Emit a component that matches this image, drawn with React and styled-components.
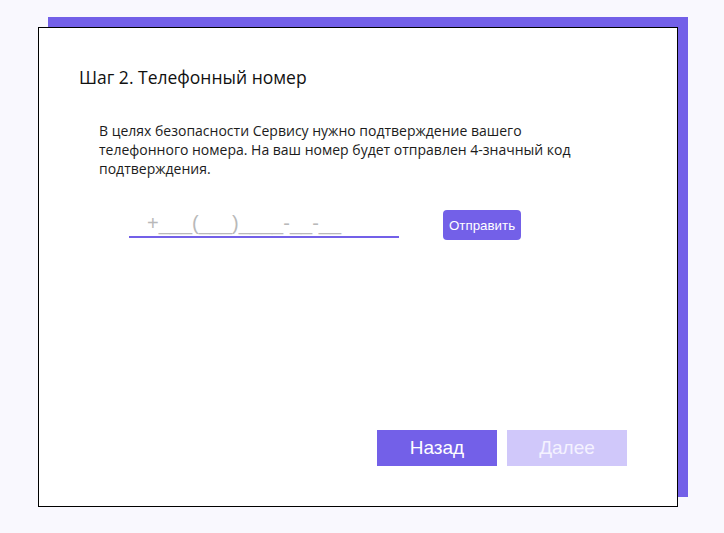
import React from "react";
import styled, { createGlobalStyle } from "styled-components";

const Global = createGlobalStyle`
  html, body { margin: 0; padding: 0; }
  body {
    background: #f9f8fe;
    font-family: "Open Sans", "Noto Sans", sans-serif;
    width: 724px;
    height: 533px;
    overflow: hidden;
  }
`;

const Page = styled.div`
  padding: 27px 0 0 38px;
`;

const Card = styled.section`
  box-sizing: border-box;
  width: 640px;
  height: 480px;
  background: #fff;
  border: 1px solid #000;
  box-shadow: 10px -10px 0 #7360e8;
  padding: 38px 40px 40px 40px;
  display: flex;
  flex-direction: column;
`;

const Title = styled.h2`
  margin: 0;
  font-size: 17.5px;
  font-weight: 400;
  line-height: 23px;
  color: #111;
`;

const Text = styled.p`
  margin: 32px 0 0 20px;
  width: 500px;
  font-size: 14px;
  line-height: 19px;
  color: #1c1c1c;
`;

const PhoneRow = styled.div`
  display: flex;
  align-items: flex-start;
  gap: 44px;
  margin: 32px 0 0 50px;
`;

const PhoneInput = styled.input`
  box-sizing: border-box;
  width: 270px;
  height: 28px;
  border: none;
  border-bottom: 2px solid #7360e8;
  outline: none;
  padding: 0 0 0 18px;
  font-family: "Liberation Sans", Arial, sans-serif;
  font-size: 20px;
  color: #333;
  background: transparent;
  &::placeholder { color: #b9b9b9; }
`;

const SmallButton = styled.button`
  box-sizing: border-box;
  height: 30px;
  padding: 0 6px;
  border: none;
  border-radius: 4px;
  background: #7360e8;
  color: #fff;
  font-family: "Liberation Sans", Arial, sans-serif;
  font-size: 13.33px;
`;

const Actions = styled.div`
  margin-top: auto;
  margin-right: 10px;
  display: flex;
  justify-content: flex-end;
  gap: 10px;
`;

const NavButton = styled.button`
  box-sizing: border-box;
  width: 120px;
  height: 36px;
  border: none;
  background: ${(p) => (p.$disabled ? "#d0c8fa" : "#7360e8")};
  color: ${(p) => (p.$disabled ? "#f4f2ff" : "#fff")};
  font-family: "Liberation Sans", Arial, sans-serif;
  font-size: 19px;
`;

export default function App() {
  return (
    <>
      <Global />
      <Page>
        <Card>
          <Title>Шаг 2. Телефонный номер</Title>
          <Text>
            В целях безопасности Сервису нужно подтверждение вашего телефонного
            номера. На ваш номер будет отправлен 4-значный код подтверждения.
          </Text>
          <PhoneRow>
            <PhoneInput placeholder="+___(___)____-__-__" />
            <SmallButton>Отправить</SmallButton>
          </PhoneRow>
          <Actions>
            <NavButton>Назад</NavButton>
            <NavButton $disabled>Далее</NavButton>
          </Actions>
        </Card>
      </Page>
    </>
  );
}
